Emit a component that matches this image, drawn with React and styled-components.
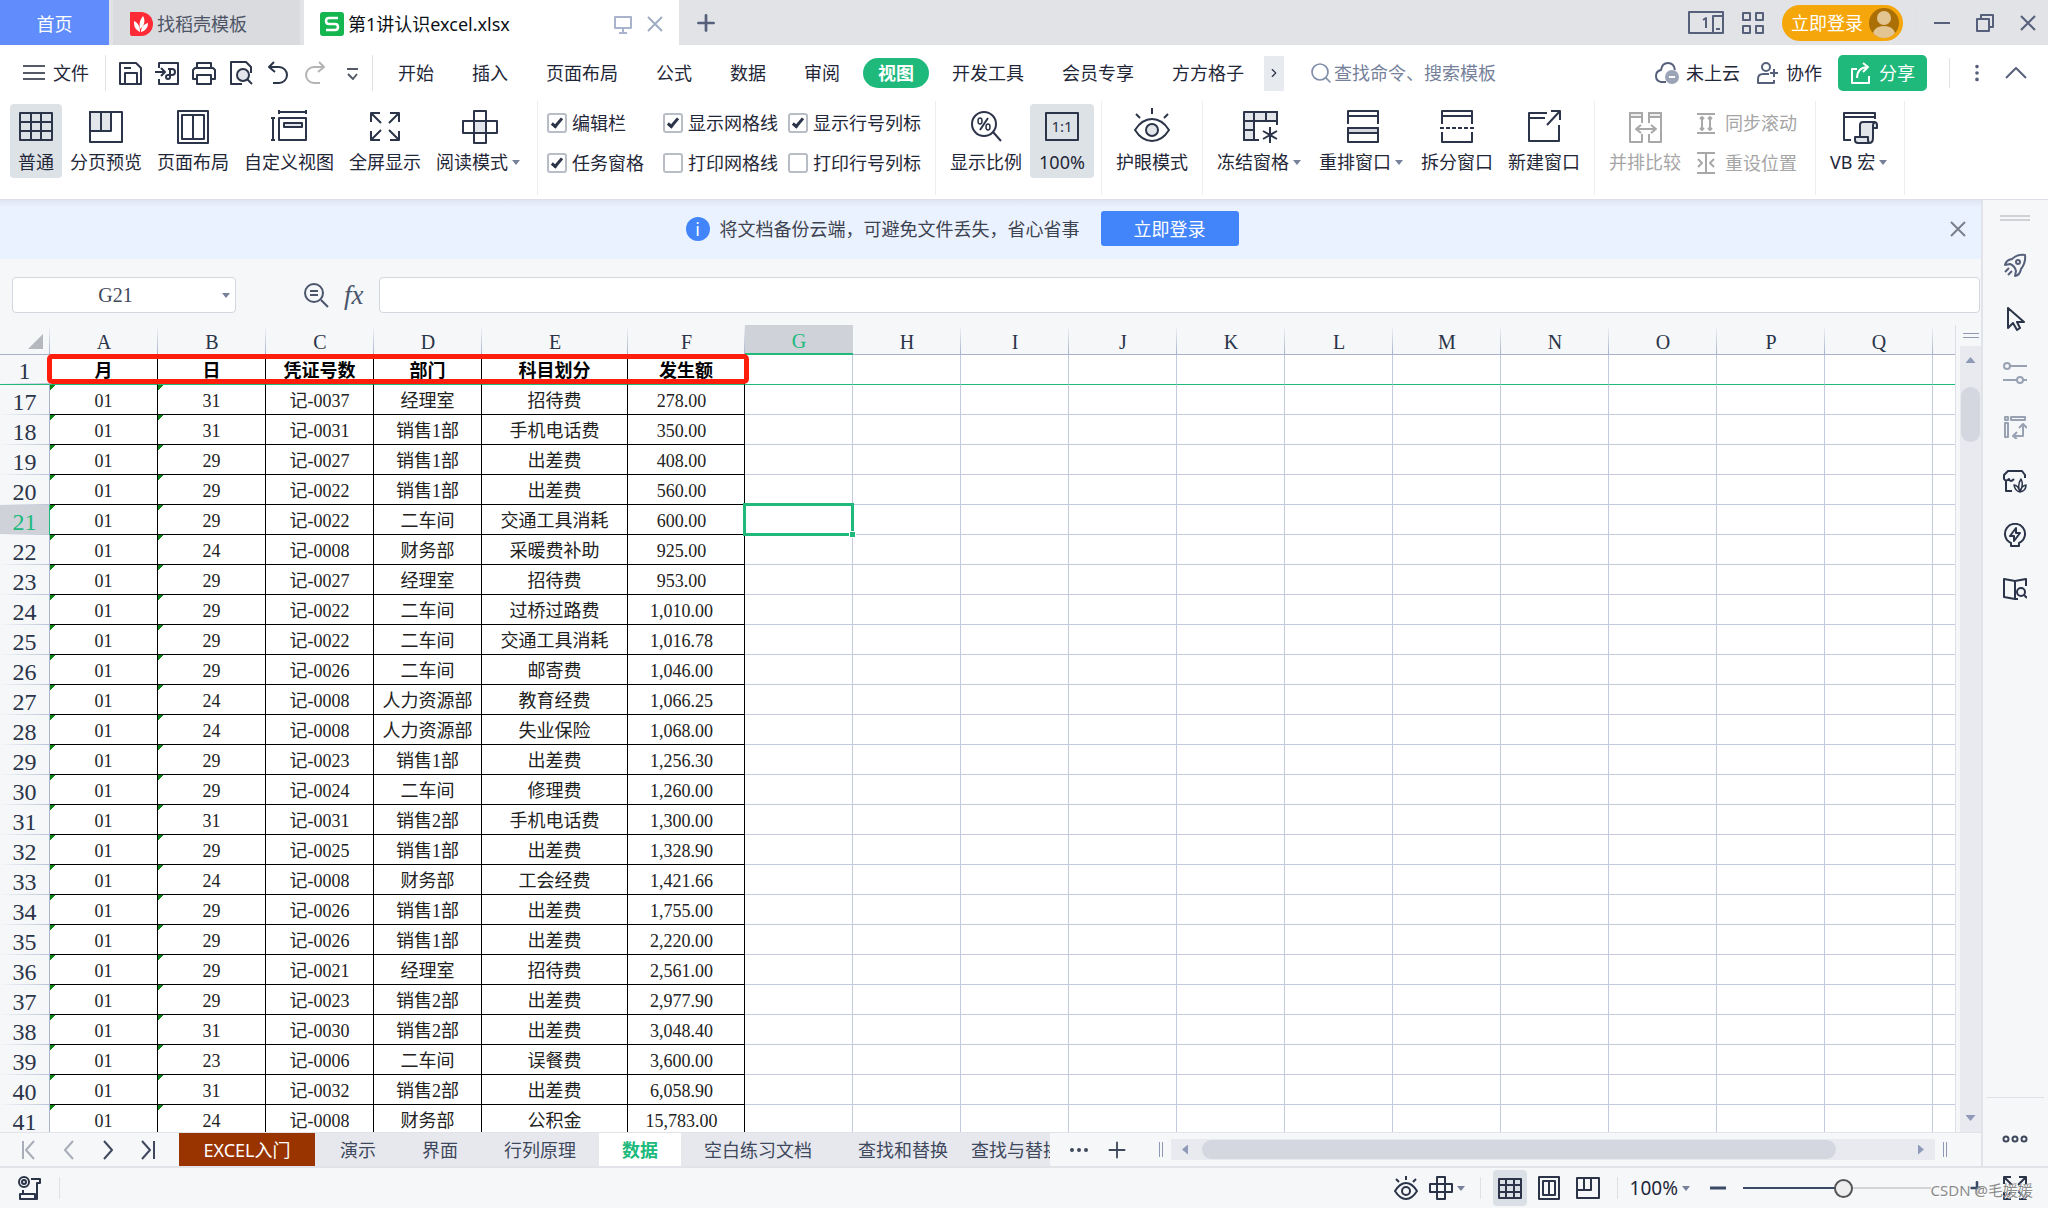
import styled, { createGlobalStyle, css } from "styled-components";
import {
  ChevronRight,
  Ellipsis,
  EllipsisVertical,
  Plus,
  Search,
} from "lucide-react";

const INK = "#2b3448";
const GREEN = "#20b97c";

const GlobalStyle = createGlobalStyle`
  *, *::before, *::after { box-sizing: border-box; }
  body {
    margin: 0;
    overflow: hidden;
    background: #f5f7f9;
    color: #1f2738;
    font-family: "Noto Sans", "Noto Sans CJK SC", sans-serif;
    font-size: 18px;
    line-height: 24px;
  }
  button, input {
    margin: 0;
    padding: 0;
    border: 0;
    background: none;
    color: inherit;
    font: inherit;
  }
  svg { display: block; flex: none; }
`;

/* ---------- data ---------- */

const menus = [
  "开始",
  "插入",
  "页面布局",
  "公式",
  "数据",
  "审阅",
  "视图",
  "开发工具",
  "会员专享",
  "方方格子",
];

const checks = [
  ["编辑栏", true],
  ["显示网格线", true],
  ["显示行号列标", true],
  ["任务窗格", true],
  ["打印网格线", false],
  ["打印行号列标", false],
];

const columns = [
  ["A", 108],
  ["B", 108],
  ["C", 108],
  ["D", 108],
  ["E", 146],
  ["F", 117],
  ["G", 108],
  ["H", 108],
  ["I", 108],
  ["J", 108],
  ["K", 108],
  ["L", 108],
  ["M", 108],
  ["N", 108],
  ["O", 108],
  ["P", 108],
  ["Q", 108],
  ["", 108],
];

const rowHeadWidth = 50;
const tableWidth = columns.reduce((sum, [, width]) => sum + width, rowHeadWidth);

const emptyColumns = columns.slice(6).map(([name]) => name);

const headings = ["月", "日", "凭证号数", "部门", "科目划分", "发生额"];

const rows = [
  ["31", "记-0037", "经理室", "招待费", "278.00"],
  ["31", "记-0031", "销售1部", "手机电话费", "350.00"],
  ["29", "记-0027", "销售1部", "出差费", "408.00"],
  ["29", "记-0022", "销售1部", "出差费", "560.00"],
  ["29", "记-0022", "二车间", "交通工具消耗", "600.00"],
  ["24", "记-0008", "财务部", "采暖费补助", "925.00"],
  ["29", "记-0027", "经理室", "招待费", "953.00"],
  ["29", "记-0022", "二车间", "过桥过路费", "1,010.00"],
  ["29", "记-0022", "二车间", "交通工具消耗", "1,016.78"],
  ["29", "记-0026", "二车间", "邮寄费", "1,046.00"],
  ["24", "记-0008", "人力资源部", "教育经费", "1,066.25"],
  ["24", "记-0008", "人力资源部", "失业保险", "1,068.00"],
  ["29", "记-0023", "销售1部", "出差费", "1,256.30"],
  ["29", "记-0024", "二车间", "修理费", "1,260.00"],
  ["31", "记-0031", "销售2部", "手机电话费", "1,300.00"],
  ["29", "记-0025", "销售1部", "出差费", "1,328.90"],
  ["24", "记-0008", "财务部", "工会经费", "1,421.66"],
  ["29", "记-0026", "销售1部", "出差费", "1,755.00"],
  ["29", "记-0026", "销售1部", "出差费", "2,220.00"],
  ["29", "记-0021", "经理室", "招待费", "2,561.00"],
  ["29", "记-0023", "销售2部", "出差费", "2,977.90"],
  ["31", "记-0030", "销售2部", "出差费", "3,048.40"],
  ["23", "记-0006", "二车间", "误餐费", "3,600.00"],
  ["31", "记-0032", "销售2部", "出差费", "6,058.90"],
  ["24", "记-0008", "财务部", "公积金", "15,783.00"],
];

const sheets = ["演示", "界面", "行列原理", "数据", "空白练习文档", "查找和替换"];

/* ---------- icons ---------- */

function Icon({ w = 24, h = w, color = INK, sw = 2, children }) {
  return (
    <svg
      width={w}
      height={h}
      viewBox={`0 0 ${w} ${h}`}
      fill="none"
      stroke={color}
      strokeWidth={sw}
      strokeLinejoin="round"
      aria-hidden="true"
    >
      {children}
    </svg>
  );
}

const big = { w: 38, h: 36 };
const shade = "#e2e5e9";

const GridIcon = () => (
  <Icon {...big}>
    <path d="M3 5h32v27H3zM3 14h32M3 23h32M14 5v27M24 5v27" />
  </Icon>
);

const PageBreakIcon = () => (
  <Icon {...big}>
    <path d="M3 4h21v19H3z" fill={shade} />
    <path d="M3 4h32v30H3zM14 4v19" />
  </Icon>
);

const PageLayoutIcon = () => (
  <Icon {...big}>
    <path d="M4 3h30v32H4zM8 7h22v24H8zM19 7v24" />
  </Icon>
);

const CustomViewIcon = () => (
  <Icon {...big}>
    <path d="M9 4h27M9 2v4M36 2v4M3 10v22M1 10h4M1 32h4M9 10h27v22H9z" />
    <path d="M14 15h18v4H14z" fill={shade} />
  </Icon>
);

const FullScreenIcon = () => (
  <Icon {...big}>
    <path d="M5 14V5h9M5 5l10 10M24 5h9v9M33 5L23 15M5 23v9h9M5 32l10-10M24 32h9v-9M33 32L23 22" />
  </Icon>
);

const ReadingIcon = () => (
  <Icon {...big}>
    <path d="M13 13h12v12H13z" fill={shade} />
    <path d="M13 3h12v32H13zM2 13h34v12H2z" />
  </Icon>
);

const ZoomRatioIcon = () => (
  <Icon {...big}>
    <circle cx="17" cy="16" r="12" />
    <path d="M26 24l8 9M21 10l-8 12" />
    <ellipse cx="13" cy="13" rx="2" ry="3" strokeWidth="1.5" />
    <ellipse cx="21" cy="19" rx="2" ry="3" strokeWidth="1.5" />
  </Icon>
);

const ActualSizeIcon = () => (
  <Icon {...big}>
    <path d="M3 5h32v27H3z" />
    <text
      x="19"
      y="24"
      textAnchor="middle"
      fontSize="15"
      fontFamily="Noto Sans"
      fill={INK}
      stroke="none"
    >
      1:1
    </text>
  </Icon>
);

const EyeIcon = () => (
  <Icon {...big}>
    <path d="M2 22C7 14 12 11 19 11s12 3 17 11C31 30 26 33 19 33S7 30 2 22z" />
    <circle cx="19" cy="22" r="6" fill={shade} />
    <path d="M19 0v6M3 6l4 4M35 6l-4 4" />
  </Icon>
);

const FreezeIcon = () => (
  <Icon {...big}>
    <path d="M2 4h33v9H12v19H2z" fill={shade} />
    <path d="M2 4h33v13M35 13H2M12 4v28M24 4v9M2 22h10M2 4v28h15" />
    <path d="M28 19v16M21 23l14 8M35 23l-14 8" />
  </Icon>
);

const ArrangeIcon = () => (
  <Icon {...big}>
    <path d="M4 20h30v5H4z" fill="#d6dae0" />
    <path d="M4 16V3h30v13M4 8h30M4 20h30v14H4zM4 25h30" />
  </Icon>
);

const SplitIcon = () => (
  <Icon {...big}>
    <path d="M4 16V3h30v13M4 8h30M4 24v10h30V24" />
    <path d="M2 20h34" strokeDasharray="4 2" />
  </Icon>
);

const NewWindowIcon = () => (
  <Icon {...big}>
    <path d="M22 5H4v28h30V17M4 10h16M22 17L35 3M26 3h9v9" />
  </Icon>
);

const CompareIcon = () => (
  <Icon {...big} color="#a8a8a8">
    <path d="M4 5h12v4H4zM23 5h12v4H23z" fill="#eeeeee" />
    <path d="M16 15V5H4v29h12v-8M23 15V5h12v29H23v-8M4 9h12M23 9h12M11 21h18M15 17l-5 4 5 4M25 17l5 4-5 4" />
  </Icon>
);

const MacroIcon = () => (
  <Icon {...big}>
    <path d="M10 32H3V5h31v6M3 9h31" />
    <path
      d="M19 28V17q0-3 3-3h11q3 0 3 3v3h-4v10q0 5-4 5H17q-3 0-3-3v-3h13v3q0 3 2 3"
      fill={shade}
    />
    <path d="M32 20v-3q0-2 2-3" />
  </Icon>
);

const SyncScrollIcon = () => (
  <Icon w={20} h={24} color="#a8a8a8">
    <path d="M1 3h18M1 22h18M6 6v13M14 6v13" />
    <path d="M4 8l2-2 2 2M4 17l2 2 2-2M12 8l2-2 2 2M12 17l2 2 2-2" />
  </Icon>
);

const ResetPositionIcon = () => (
  <Icon w={20} h={24} color="#a8a8a8">
    <path d="M1 2h18M1 22h18M10 2v20M2 8l4 4-4 4M18 8l-4 4 4 4" />
  </Icon>
);

const LeafLogo = () => (
  <svg width="24" height="24" viewBox="0 0 24 24" aria-hidden="true">
    <path d="M1 0h11a12 12 0 0 1 0 24H3a2 2 0 0 1-2-2z" fill="#fe2a35" />
    <path
      d="M11 20C5 17 5 13 5 9c4 2 6 5 6 11zM11 17c-1-6 0-9 3-13 3 5 1 10-3 13zM12 20c0-5 3-8 7-9 0 5-3 8-7 9z"
      fill="#fff"
    />
  </svg>
);

const SheetLogo = () => (
  <svg width="24" height="24" viewBox="0 0 24 24" aria-hidden="true">
    <rect width="24" height="24" rx="3" fill="#15b550" />
    <path
      d="M18 6H9q-3 0-3 3t3 3h6q3 0 3 3t-3 3H6"
      fill="none"
      stroke="#fff"
      strokeWidth="2.5"
    />
  </svg>
);

const MonitorIcon = () => (
  <Icon w={18} h={20} color="#a9b4cc">
    <path d="M1 3h16v11H1zM9 14v5M5 19h8" />
  </Icon>
);

const CrossIcon = ({ color = "#56607b" }) => (
  <Icon w={16} color={color}>
    <path d="M1 1l14 14M15 1L1 15" />
  </Icon>
);

const DashIcon = ({ color = "#56607b", sw = 2 }) => (
  <Icon w={16} color={color} sw={sw}>
    <path d="M0 8h16" />
  </Icon>
);

const PanelIcon = () => (
  <Icon w={36} h={24} color="#56607b">
    <path d="M1 1h34v21H1zM25 22V5h10M28 18h4" />
    <path d="M15 9l3-2v10" />
  </Icon>
);

const AppsIcon = () => (
  <Icon w={22} h={24} color="#56607b">
    <path d="M1 2h7v7H1zM14 2h7v7h-7zM1 15h7v7H1zM14 15h7v7h-7z" />
  </Icon>
);

const Avatar = () => (
  <svg width="30" height="30" viewBox="0 0 30 30" aria-hidden="true">
    <circle cx="15" cy="15" r="15" fill="#aa6f05" />
    <circle cx="15" cy="10" r="7" fill="#e3c592" />
    <path d="M4 25q2-7 11-7t11 7q-4 5-11 5T4 25z" fill="#e3c592" />
  </svg>
);

const RestoreIcon = () => (
  <Icon w={20} h={20} color="#56607b">
    <path d="M6 6V2h12v12h-4M2 6h12v12H2z" />
  </Icon>
);

const HamburgerIcon = () => (
  <Icon w={24} h={24} color="#555b66">
    <path d="M1 5h22M1 12h22M1 18h22" />
  </Icon>
);

const SaveIcon = () => (
  <Icon>
    <path d="M2 2h16l5 5v16H2zM7 23V12h12v11M6 7h7" />
  </Icon>
);

const PdfIcon = () => (
  <Icon>
    <path d="M4 7V2h19v21H4v-5M0 11h9M6 7l4 4-4 4M13 8h4q3 0 3 3t-3 3h-4q-2 0-2 2t2 2 2-2V8" />
  </Icon>
);

const PrintIcon = () => (
  <Icon>
    <path d="M5 7V2h14v5M5 18H1V9l2-2h18l2 2v9h-4M5 14h14v9H5z" />
  </Icon>
);

const PreviewIcon = () => (
  <Icon>
    <path d="M13 23H2V1h15l5 5v6" />
    <circle cx="14" cy="14" r="6" fill="#e3e5ea" />
    <path d="M18 18l5 5" />
  </Icon>
);

const UndoIcon = () => (
  <Icon>
    <path d="M8 1L3 6l6 5M3 6h10a8 8 0 0 1 0 16H7" />
  </Icon>
);

const RedoIcon = () => (
  <Icon color="#b4b4b6">
    <path d="M16 1l5 5-6 5M21 6H11a8 8 0 0 0 0 16h6" />
  </Icon>
);

const MoreToolsIcon = () => (
  <Icon color="#555b66">
    <path d="M7 8h11M8 13l5 5 4-5" />
  </Icon>
);

const CloudIcon = () => (
  <Icon w={26} h={24} color="#56607b">
    <path d="M12 21H7q-5-1-5-6t5-6q1-7 7-7t7 7" />
    <circle cx="18" cy="16" r="7" fill="#9aa4b6" stroke="none" />
    <path d="M15 16h6" stroke="#fff" />
  </Icon>
);

const PeopleIcon = () => (
  <Icon w={24} h={24} color="#56607b">
    <circle cx="10" cy="6" r="4" />
    <path d="M13 13H7q-5 0-5 5v4h16v-3M18 8v8M14 12h8" />
  </Icon>
);

const ShareIcon = () => (
  <Icon w={22} h={24} color="#fff">
    <path d="M7 8H2v14h17v-7M7 17q0-10 10-11M13 2l5 4-5 5" />
  </Icon>
);

const CollapseIcon = () => (
  <Icon w={24} color="#56607b">
    <path d="M2 17l10-10 10 10" />
  </Icon>
);

const FindIcon = () => (
  <Icon w={26} h={26} color="#4b556b">
    <circle cx="11" cy="11" r="9" />
    <path d="M18 18l7 7M7 9h8M7 13h8" />
  </Icon>
);

const FirstSheetIcon = () => (
  <Icon color="#a9adb8">
    <path d="M5 3v18M16 3l-8 9 8 9" />
  </Icon>
);

const PrevSheetIcon = () => (
  <Icon color="#a9adb8">
    <path d="M16 3l-8 9 8 9" />
  </Icon>
);

const NextSheetIcon = () => (
  <Icon color="#3f485c">
    <path d="M8 3l8 9-8 9" />
  </Icon>
);

const LastSheetIcon = () => (
  <Icon color="#3f485c">
    <path d="M7 3l8 9-8 9M19 3v18" />
  </Icon>
);

const RocketIcon = () => (
  <Icon color="#56607b">
    <path d="M22 2q-8-1-13 4Q3 7 2 12l5-1q5 2 6 7l-1 5q5-1 6-7 5-6 4-14z" />
    <circle cx="15" cy="9" r="2" />
    <path d="M6 15l-4 4M9 18l-4 4" />
  </Icon>
);

const CursorIcon = () => (
  <Icon>
    <path d="M5 1v20l5-5 4 7 3-2-3-6h7z" />
  </Icon>
);

const SlidersIcon = () => (
  <Icon color="#98a2b3">
    <circle cx="4" cy="5" r="3" />
    <circle cx="17" cy="19" r="3" />
    <path d="M7 5h17M0 19h14M20 19h4" />
  </Icon>
);

const SwapIcon = () => (
  <Icon color="#98a2b3">
    <path d="M2 2h3v3H2zM8 2h14v3H8zM2 8h3v14H2zM20 10v11h-9M16 13l4-4 4 4M14 17l-4 4 4 3" />
  </Icon>
);

const ShopIcon = () => (
  <Icon>
    <path d="M9 22H3V12M22 9V6l-3-4H5L1 6v4q2 3 5 0 1 4 5 0" />
    <path
      d="M17 23q-5-1-6-7 4 0 6 7zM17 23q-3-7 1-13 3 6-1 13zM17 23q1-6 6-7 0 6-6 7z"
      strokeWidth="1.5"
    />
  </Icon>
);

const BulbIcon = () => (
  <Icon>
    <path d="M8 23v-3A10 10 0 1 1 16 20v3zM13 5l-6 8h4v5l6-8h-4z" />
  </Icon>
);

const BookSearchIcon = () => (
  <Icon>
    <path d="M12 4L1 2v18l11 2zM12 4l11-2v7M12 22h3" />
    <circle cx="18" cy="15" r="4" />
    <path d="M21 18l3 3" />
  </Icon>
);

const MacroRecordIcon = () => (
  <Icon w={26} h={26}>
    <circle cx="7" cy="7" r="5" />
    <circle cx="7" cy="7" r="2" />
    <path d="M14 4h9v4h-3v16H3v-5h15v5M6 15v4" />
  </Icon>
);

const SmallEyeIcon = () => (
  <Icon>
    <path d="M1 15q5-8 11-8t11 8q-5 8-11 8T1 15zM12 0v4M2 3l3 3M22 3l-3 3" />
    <circle cx="12" cy="15" r="4" />
  </Icon>
);

const SmallCrossIcon = () => (
  <Icon>
    <path d="M8 1h8v22H8zM1 8h22v8H1z" />
  </Icon>
);

const SmallGridIcon = () => (
  <Icon>
    <path d="M1 3h22v19H1zM1 9h22M1 16h22M8 3v19M16 3v19" />
  </Icon>
);

const SmallBookIcon = () => (
  <Icon>
    <path d="M2 1h20v22H2zM6 5h12v14H6zM12 5v14" />
  </Icon>
);

const SmallBreakIcon = () => (
  <Icon>
    <path d="M1 2h22v20H1zM1 14h14V2M8 2v12" />
  </Icon>
);

const SmallExpandIcon = () => (
  <Icon>
    <path d="M1 8V1h7M1 1l8 8M16 1h7v7M23 1l-8 8M1 16v7h7M1 23l8-8M16 23h7v-7M23 23l-8-8" />
  </Icon>
);

/* ---------- shared bits ---------- */

const Caret = styled.span`
  width: 0;
  height: 0;
  margin: 0 3px 0 4px;
  border: 4px solid transparent;
  border-top: 5px solid #77819a;
  border-bottom: 0;
`;

const Divider = styled.span`
  width: 1px;
  height: ${(p) => p.$h || 36}px;
  background: #dfe1e6;
`;

const IconButton = styled.button`
  display: flex;
  align-items: center;
  justify-content: center;
`;

/* ---------- title bar ---------- */

const TitleBar = styled.header`
  display: flex;
  align-items: center;
  height: 45px;
  background: #e1e3e7;
  color: #56607b;
`;

const HomeTab = styled.button`
  width: 109px;
  height: 45px;
  padding-top: 2px;
  background: #608dfb;
  color: #fff;
`;

const DocTab = styled.button`
  display: flex;
  align-items: center;
  gap: 4px;
  width: ${(p) => p.$width}px;
  height: 45px;
  margin-left: 4px;
  padding: 2px 16px 0;
  background: ${(p) => (p.$active ? "#fff" : "#d9dbdf")};
  color: ${(p) => (p.$active ? "#0b0f18" : "#4c5466")};
`;

const TabTail = styled.span`
  display: flex;
  align-items: center;
  gap: 15px;
  margin-left: auto;
`;

const NewTabButton = styled(IconButton)`
  margin-left: 14px;
`;

const WindowTools = styled.div`
  display: flex;
  align-items: center;
  gap: 18px;
  margin-left: auto;
  padding-right: 12px;
`;

const LoginPill = styled.button`
  display: flex;
  align-items: center;
  gap: 6px;
  height: 36px;
  margin-right: -6px;
  padding: 0 4px 0 9px;
  border-radius: 18px;
  background: #f5a60a;
  color: #fff;
`;

const WindowButtons = styled.div`
  display: flex;
  align-items: center;
  gap: 25px;
`;

/* ---------- menu row ---------- */

const MenuRow = styled.nav`
  display: flex;
  align-items: center;
  height: 56px;
  padding: 0 20px 0 22px;
  background: #fff;
`;

const FileButton = styled.button`
  display: flex;
  align-items: center;
  gap: 7px;
  margin-right: 16px;
`;

const QuickTools = styled.div`
  display: flex;
  gap: 13px;
  padding: 0 8px 0 12px;
`;

const MenuList = styled.div`
  display: flex;
  align-items: center;
  gap: 8px;
  padding-left: 10px;
`;

const MenuItem = styled.button`
  height: 30px;
  padding: 0 15px;
  border-radius: 15px;
  ${(p) =>
    p.$active &&
    css`
      background: ${GREEN};
      color: #fff;
      font-weight: 700;
    `}
`;

const MenuMore = styled(IconButton)`
  width: 20px;
  height: 35px;
  margin-left: 5px;
  background: #e7ebef;
`;

const SearchBox = styled.label`
  display: flex;
  align-items: center;
  gap: 1px;
  flex: 1;
  margin-left: 25px;
  color: #8090ab;

  input {
    flex: 1;
    min-width: 0;
  }
  input::placeholder {
    color: #75819a;
    opacity: 1;
  }
`;

const ShareTools = styled.div`
  display: flex;
  align-items: center;
  gap: 16px;
  color: #56607b;
`;

const CloudButton = styled.button`
  display: flex;
  align-items: center;
  gap: 6px;
  color: #1f2738;
`;

const ShareButton = styled.button`
  display: flex;
  align-items: center;
  gap: 7px;
  height: 36px;
  margin-right: 6px;
  padding: 0 12px;
  border-radius: 5px;
  background: ${GREEN};
  color: #fff;
`;

/* ---------- ribbon ---------- */

const Ribbon = styled.section`
  display: flex;
  height: 99px;
  border-bottom: 1px solid #dcdfe8;
  background: #fff;
`;

const RibbonGroup = styled.div`
  display: flex;
  align-items: flex-start;
  gap: 1px;
  margin-bottom: 4px;
  padding: 3px 7px 0;
  border-right: 1px solid #eceef1;

  &:first-child {
    padding-left: 10px;
  }
`;

const RibbonButton = styled.button`
  display: flex;
  flex-direction: column;
  align-items: center;
  gap: 6px;
  height: 74px;
  padding: 4px 7px 0;
  border-radius: 4px;
  min-width: ${(p) => (p.$wide ? 64 : 50)}px;
  background: ${(p) => (p.$active ? "#dde2e6" : "none")};
  color: ${(p) => (p.disabled ? "#a5a5a5" : "inherit")};
  white-space: nowrap;

  span {
    display: flex;
    align-items: center;
  }
`;

const CheckGrid = styled.div`
  display: grid;
  grid-template-columns: 116px 125px auto;
  row-gap: 16px;
  padding: 7px 7px 0 2px;
`;

const CheckLabel = styled.label`
  display: flex;
  align-items: center;
  gap: 5px;
  white-space: nowrap;
`;

const CheckBox = styled.input`
  appearance: none;
  display: grid;
  place-items: center;
  width: 20px;
  height: 20px;
  border: 2px solid #b9bdc6;
  border-radius: 3px;
  background: #fff;

  &:checked::after {
    content: "";
    width: 12px;
    height: 6px;
    margin-bottom: 3px;
    border-left: 3px solid ${INK};
    border-bottom: 3px solid ${INK};
    transform: rotate(-50deg);
  }
`;

const SideBySide = styled.div`
  display: flex;
  flex-direction: column;
  gap: 16px;
  padding: 7px 11px 0 7px;
`;

const SmallTool = styled.button`
  display: flex;
  align-items: center;
  gap: 9px;
  color: #a5a5a5;
`;

function Tool({ icon, label, active, caret, wide, disabled }) {
  return (
    <RibbonButton $active={active} $wide={wide} disabled={disabled}>
      {icon}
      <span>
        {label}
        {caret && <Caret />}
      </span>
    </RibbonButton>
  );
}

/* ---------- work area ---------- */

const Window = styled.div`
  display: flex;
  flex-direction: column;
  height: 100vh;
`;

const Work = styled.div`
  display: flex;
  flex: 1;
  min-height: 0;
`;

const Editor = styled.main`
  display: flex;
  flex-direction: column;
  flex: 1;
  min-width: 0;
`;

const Banner = styled.div`
  display: flex;
  align-items: center;
  height: 59px;
  padding: 0 15px 2px 0;
  background: linear-gradient(#dfe5f2, #ebf2ff 7px);
  color: #3e4350;
`;

const BannerBody = styled.div`
  display: flex;
  align-items: center;
  justify-content: center;
  flex: 1;
  gap: 10px;
  margin-left: -26px;
`;

const InfoDot = styled.span`
  width: 24px;
  height: 24px;
  border-radius: 12px;
  background: #4285fb;
  color: #fff;
  text-align: center;
`;

const BannerButton = styled.button`
  width: 138px;
  height: 35px;
  margin-left: 11px;
  border-radius: 3px;
  background: #4285fb;
  color: #fff;
`;

const FormulaBar = styled.div`
  display: flex;
  align-items: center;
  height: 66px;
  padding: 6px 1px 0 12px;
`;

const NameBox = styled.div`
  display: flex;
  align-items: center;
  width: 224px;
  height: 36px;
  padding-right: 2px;
  border: 1px solid #d3d6dd;
  border-radius: 4px;
  background: #fff;

  input {
    flex: 1;
    min-width: 0;
    color: #3f485c;
    font: 20px/24px "Liberation Serif", serif;
    text-align: center;
  }
`;

const FormulaTools = styled.div`
  display: flex;
  align-items: center;
  gap: 15px;
  padding: 0 15px 0 67px;
`;

const FxButton = styled.button`
  color: #4b556b;
  font: italic 27px/28px "Liberation Serif", serif;
`;

const FormulaInput = styled.input`
  flex: 1;
  height: 36px;
  padding: 0 8px;
  border: 1px solid #d3d6dd;
  border-radius: 4px;
  background: #fff;
`;

const GridArea = styled.div`
  display: flex;
  flex: 1;
  min-height: 0;
`;

const GridView = styled.div`
  position: relative;
  flex: 1;
  min-width: 0;
  overflow: hidden;
  border-right: 1px solid #dcdfe6;
`;

const Table = styled.table`
  table-layout: fixed;
  border-collapse: separate;
  border-spacing: 0;
  font-family: "Liberation Serif", "Noto Sans CJK SC", serif;
  color: #222;
  text-align: center;

  tr {
    height: 30px;
  }
`;

const ColumnHead = styled.th`
  height: 30px;
  padding: 4px 0 0;
  border-bottom: 1px solid #a9b2cc;
  background: linear-gradient(#f5f7f9, #a9b2cc) right / 1px 100% no-repeat
    #f5f7f9;
  color: ${INK};
  font-size: 20px;
  font-weight: 400;
  line-height: 24px;
  ${(p) =>
    p.$active &&
    css`
      border-bottom: 2px solid ${GREEN};
      background: #cfd2d9;
      color: ${GREEN};
    `}
`;

const Corner = styled(ColumnHead)`
  &::after {
    content: "";
    display: block;
    margin-left: 28px;
    width: 15px;
    height: 15px;
    background: #b5b8be;
    clip-path: polygon(100% 0, 100% 100%, 0 100%);
  }
`;

const RowHead = styled.th`
  height: 30px;
  padding: 3px 0 0;
  border-right: 1px solid ${(p) => (p.$active ? GREEN : "#a9b2cc")};
  background: linear-gradient(90deg, #f5f7f9, #bcc4d8) bottom / 100% 1px
    no-repeat ${(p) => (p.$active ? "#cfd2d9" : "#f5f7f9")};
  color: ${(p) => (p.$active ? GREEN : INK)};
  font-size: 24px;
  font-weight: 400;
  line-height: 24px;
`;

const Cell = styled.td`
  position: relative;
  height: 30px;
  padding: ${(p) => (p.$amount ? "3px 9px 0 0" : "3px 0 0")};
  border-right: 1px solid ${(p) => (p.$filled ? "#000" : "#c3cadd")};
  border-bottom: 1px solid ${(p) => (p.$filled ? "#000" : "#c3cadd")};
  background: ${(p) =>
    p.$flag ? "linear-gradient(135deg, #0c8415 4px, #fff 4px)" : "#fff"};
  line-height: 24px;
  white-space: nowrap;
`;

const FrozenRow = styled.tr`
  ${RowHead}, ${Cell} {
    border-bottom: 1px solid ${GREEN};
  }
  ${Cell} {
    color: #000;
    font-weight: 700;
  }
`;

const ActiveFrame = styled.span`
  position: absolute;
  z-index: 1;
  inset: -2px;
  border: 3px solid ${GREEN};

  &::after {
    content: "";
    position: absolute;
    right: -5px;
    bottom: -5px;
    width: 7px;
    height: 7px;
    border: 1px solid #fff;
    background: ${GREEN};
  }
`;

const RedFrame = styled.div`
  position: absolute;
  left: 47px;
  top: 29px;
  width: 702px;
  height: 30px;
  border: 5px solid #ff1d0c;
  border-radius: 5px;
`;

const VerticalScroll = styled.div`
  display: flex;
  flex-direction: column;
  align-items: center;
  width: 21px;
  margin-left: 4px;
`;

const SplitHandle = styled.span`
  width: 16px;
  height: 5px;
  margin: 8px 0;
  border-top: 1px solid #8e9ab5;
  border-bottom: 1px solid #8e9ab5;
`;

const ScrollTrack = styled.div`
  display: flex;
  flex-direction: column;
  flex: 1;
  width: 100%;
  padding: 9px 1px;
  background: #e8eaef;
`;

const arrowMargin = { up: "0 auto 22px", down: "auto auto 0" };

const arrowShape = {
  up: "polygon(0 80%, 50% 20%, 100% 80%)",
  down: "polygon(0 20%, 100% 20%, 50% 80%)",
  left: "polygon(80% 0, 80% 100%, 20% 50%)",
  right: "polygon(20% 0, 80% 50%, 20% 100%)",
};

const Arrow = styled.button`
  width: 10px;
  height: 10px;
  margin: ${(p) => arrowMargin[p.$dir] || 0};
  background: #8e9ab8;
  clip-path: ${(p) => arrowShape[p.$dir]};
`;

const ScrollThumb = styled.div`
  height: 55px;
  border-radius: 10px;
  background: #d4d7df;
`;

/* ---------- sheet tabs ---------- */

const SheetBar = styled.div`
  display: flex;
  align-items: center;
  height: 36px;
  padding-right: 34px;
  border-top: 1px solid #e1e3e9;
  border-bottom: 2px solid #e1e3e9;
  color: #3f485c;
`;

const SheetNav = styled.div`
  display: flex;
  align-items: center;
  gap: 15px;
  width: 179px;
  padding-left: 18px;
`;

const SheetTabs = styled.div`
  display: flex;
  width: 871px;
  overflow: hidden;
  background: #e6e8ee;
`;

const SheetTab = styled.button`
  flex: none;
  height: 33px;
  padding: 0 23px;
  background: ${(p) => (p.$active ? "#fff" : "none")};
  color: ${(p) => (p.$active ? GREEN : "#3f485c")};
  font-weight: ${(p) => (p.$active ? 700 : 400)};

  &:last-child {
    padding: 0;
  }
`;

const BrownTab = styled(SheetTab)`
  width: 136px;
  margin-right: 2px;
  background: #993300;
  color: #fff;
`;

const SheetTools = styled.div`
  display: flex;
  align-items: center;
  gap: 13px;
  padding: 0 29px 0 17px;
`;

const Grip = styled.span`
  width: 4px;
  height: 15px;
  border-left: 1px solid #8e9ab5;
  border-right: 1px solid #8e9ab5;
`;

const HorizontalScroll = styled.div`
  display: flex;
  align-items: center;
  flex: 1;
  height: 21px;
  margin: 0 8px;
  padding: 0 9px;
  background: #e8eaef;
`;

const HorizontalThumb = styled.div`
  width: 85%;
  height: 19px;
  margin: 0 auto 0 12px;
  border-radius: 10px;
  background: #d4d7df;
`;

/* ---------- side panel and status bar ---------- */

const SidePanel = styled.aside`
  display: flex;
  flex-direction: column;
  align-items: center;
  gap: 30px;
  width: 67px;
  padding: 15px 2px 0 0;
  border-left: 2px solid #e1e3e9;
  border-bottom: 2px solid #e1e3e9;
`;

const PanelGrip = styled.span`
  width: 30px;
  height: 6px;
  margin-bottom: 2px;
  border-top: 2px solid #cfd1d4;
  border-bottom: 2px solid #cfd1d4;
`;

const PanelMore = styled.div`
  display: flex;
  justify-content: center;
  width: 58px;
  height: 69px;
  margin-top: auto;
  padding-top: 29px;
  border-top: 1px solid #dfe1e8;
`;

const StatusBar = styled.footer`
  position: relative;
  display: flex;
  align-items: center;
  height: 40px;
  padding: 0 21px 0 17px;
`;

const StatusLeft = styled.div`
  display: flex;
  align-items: center;
  gap: 16px;
  margin-right: auto;
`;

const StatusGroup = styled.div`
  display: flex;
  align-items: center;
  gap: ${(p) => p.$gap}px;
  padding: 0 12px;
`;

const DropIcon = styled.button`
  display: flex;
  align-items: center;
`;

const ViewButton = styled(IconButton)`
  width: 34px;
  height: 36px;
  border-radius: 4px;
  background: ${(p) => (p.$active ? "#dbe0e6" : "none")};
`;

const ZoomButton = styled.button`
  display: flex;
  align-items: center;
  font-size: 19px;
`;

const ZoomSlider = styled.input`
  appearance: none;
  width: 188px;
  height: 20px;
  background: linear-gradient(90deg, #3b4a66 54%, #d3d5d9 54%) center / 100% 2px
    no-repeat;

  &::-webkit-slider-thumb {
    appearance: none;
    width: 19px;
    height: 19px;
    border: 2px solid #555;
    border-radius: 10px;
    background: #eee;
  }
`;

const ZoomEnd = styled.div`
  display: flex;
  align-items: center;
  gap: 16px;
  margin-left: 24px;
`;

const Watermark = styled.span`
  position: absolute;
  right: 15px;
  bottom: 6px;
  color: #8b8b8b;
  font-size: 15px;
  text-shadow: 1px 1px 0 #fff;
`;

/* ---------- sheet ---------- */

function Sheet() {
  return (
    <Table style={{ width: tableWidth }}>
      <colgroup>
        <col style={{ width: rowHeadWidth }} />
        {columns.map(([name, width]) => (
          <col key={name} style={{ width }} />
        ))}
      </colgroup>
      <thead>
        <tr>
          <Corner />
          {columns.map(([name]) => (
            <ColumnHead key={name} $active={name === "G"}>
              {name}
            </ColumnHead>
          ))}
        </tr>
      </thead>
      <tbody>
        <FrozenRow>
          <RowHead>1</RowHead>
          {headings.map((text) => (
            <Cell key={text} $filled>
              {text}
            </Cell>
          ))}
          {emptyColumns.map((name) => (
            <Cell key={name} />
          ))}
        </FrozenRow>
        {rows.map(([day, voucher, dept, subject, amount], i) => {
          const number = i + 17;
          return (
            <tr key={number}>
              <RowHead $active={number === 21}>{number}</RowHead>
              <Cell $filled $flag>
                01
              </Cell>
              <Cell $filled $flag>
                {day}
              </Cell>
              <Cell $filled>{voucher}</Cell>
              <Cell $filled>{dept}</Cell>
              <Cell $filled>{subject}</Cell>
              <Cell $filled $amount>
                {amount}
              </Cell>
              {emptyColumns.map((name) => (
                <Cell key={name}>
                  {number === 21 && name === "G" && <ActiveFrame />}
                </Cell>
              ))}
            </tr>
          );
        })}
      </tbody>
    </Table>
  );
}

export default function App() {
  return (
    <Window>
      <GlobalStyle />
      <TitleBar>
        <HomeTab>首页</HomeTab>
        <DocTab $width={187}>
          <LeafLogo />
          找稻壳模板
        </DocTab>
        <DocTab $width={375} $active>
          <SheetLogo />
          第1讲认识excel.xlsx
          <TabTail>
            <MonitorIcon />
            <CrossIcon color="#a0abc4" />
          </TabTail>
        </DocTab>
        <NewTabButton aria-label="新建标签">
          <Plus size={26} strokeWidth={2.5} />
        </NewTabButton>
        <WindowTools>
          <PanelIcon />
          <AppsIcon />
          <LoginPill>
            立即登录
            <Avatar />
          </LoginPill>
          <Divider $h={30} />
          <WindowButtons>
            <DashIcon />
            <RestoreIcon />
            <CrossIcon />
          </WindowButtons>
        </WindowTools>
      </TitleBar>

      <MenuRow>
        <FileButton>
          <HamburgerIcon />
          文件
        </FileButton>
        <Divider />
        <QuickTools>
          <SaveIcon />
          <PdfIcon />
          <PrintIcon />
          <PreviewIcon />
          <UndoIcon />
          <RedoIcon />
          <MoreToolsIcon />
        </QuickTools>
        <Divider />
        <MenuList>
          {menus.map((name) => (
            <MenuItem key={name} $active={name === "视图"}>
              {name}
            </MenuItem>
          ))}
        </MenuList>
        <MenuMore aria-label="更多">
          <ChevronRight size={14} color={INK} />
        </MenuMore>
        <SearchBox>
          <Search size={24} strokeWidth={1.7} />
          <input placeholder="查找命令、搜索模板" />
        </SearchBox>
        <ShareTools>
          <CloudButton>
            <CloudIcon />
            未上云
          </CloudButton>
          <CloudButton>
            <PeopleIcon />
            协作
          </CloudButton>
          <ShareButton>
            <ShareIcon />
            分享
          </ShareButton>
          <Divider $h={30} />
          <EllipsisVertical size={22} />
          <CollapseIcon />
        </ShareTools>
      </MenuRow>

      <Ribbon>
        <RibbonGroup>
          <Tool icon={<GridIcon />} label="普通" active />
          <Tool icon={<PageBreakIcon />} label="分页预览" />
          <Tool icon={<PageLayoutIcon />} label="页面布局" />
          <Tool icon={<CustomViewIcon />} label="自定义视图" />
          <Tool icon={<FullScreenIcon />} label="全屏显示" />
          <Tool icon={<ReadingIcon />} label="阅读模式" caret />
        </RibbonGroup>
        <RibbonGroup>
          <CheckGrid>
            {checks.map(([text, on]) => (
              <CheckLabel key={text}>
                <CheckBox type="checkbox" defaultChecked={on} />
                {text}
              </CheckLabel>
            ))}
          </CheckGrid>
        </RibbonGroup>
        <RibbonGroup>
          <Tool icon={<ZoomRatioIcon />} label="显示比例" />
          <Tool icon={<ActualSizeIcon />} label="100%" active wide />
        </RibbonGroup>
        <RibbonGroup>
          <Tool icon={<EyeIcon />} label="护眼模式" />
        </RibbonGroup>
        <RibbonGroup>
          <Tool icon={<FreezeIcon />} label="冻结窗格" caret />
          <Tool icon={<ArrangeIcon />} label="重排窗口" caret />
          <Tool icon={<SplitIcon />} label="拆分窗口" />
          <Tool icon={<NewWindowIcon />} label="新建窗口" />
        </RibbonGroup>
        <RibbonGroup>
          <Tool icon={<CompareIcon />} label="并排比较" disabled />
          <SideBySide>
            <SmallTool disabled>
              <SyncScrollIcon />
              同步滚动
            </SmallTool>
            <SmallTool disabled>
              <ResetPositionIcon />
              重设位置
            </SmallTool>
          </SideBySide>
        </RibbonGroup>
        <RibbonGroup>
          <Tool icon={<MacroIcon />} label="VB 宏" caret />
        </RibbonGroup>
      </Ribbon>

      <Work>
        <Editor>
          <Banner>
            <BannerBody>
              <InfoDot>i</InfoDot>
              将文档备份云端，可避免文件丢失，省心省事
              <BannerButton>立即登录</BannerButton>
            </BannerBody>
            <IconButton aria-label="关闭">
              <CrossIcon color="#7b7f8a" />
            </IconButton>
          </Banner>

          <FormulaBar>
            <NameBox>
              <input aria-label="名称框" defaultValue="G21" />
              <Caret />
            </NameBox>
            <FormulaTools>
              <FindIcon />
              <FxButton>fx</FxButton>
            </FormulaTools>
            <FormulaInput aria-label="编辑栏" />
          </FormulaBar>

          <GridArea>
            <GridView>
              <Sheet />
              <RedFrame />
            </GridView>
            <VerticalScroll>
              <SplitHandle />
              <ScrollTrack>
                <Arrow $dir="up" aria-label="向上" />
                <ScrollThumb />
                <Arrow $dir="down" aria-label="向下" />
              </ScrollTrack>
            </VerticalScroll>
          </GridArea>

          <SheetBar>
            <SheetNav>
              <FirstSheetIcon />
              <PrevSheetIcon />
              <NextSheetIcon />
              <LastSheetIcon />
            </SheetNav>
            <SheetTabs>
              <BrownTab>EXCEL入门</BrownTab>
              {sheets.map((name) => (
                <SheetTab key={name} $active={name === "数据"}>
                  {name}
                </SheetTab>
              ))}
              <SheetTab>查找与替换</SheetTab>
            </SheetTabs>
            <SheetTools>
              <Ellipsis size={24} />
              <Plus size={26} strokeWidth={1.7} />
            </SheetTools>
            <Grip />
            <HorizontalScroll>
              <Arrow $dir="left" aria-label="向左" />
              <HorizontalThumb />
              <Arrow $dir="right" aria-label="向右" />
            </HorizontalScroll>
            <Grip />
          </SheetBar>
        </Editor>

        <SidePanel>
          <PanelGrip />
          <RocketIcon />
          <CursorIcon />
          <SlidersIcon />
          <SwapIcon />
          <ShopIcon />
          <BulbIcon />
          <BookSearchIcon />
          <PanelMore>
            <Icon w={26} h={24} color="#3f485c">
              <circle cx="4" cy="12" r="2.5" />
              <circle cx="13" cy="12" r="2.5" />
              <circle cx="22" cy="12" r="2.5" />
            </Icon>
          </PanelMore>
        </SidePanel>
      </Work>

      <StatusBar>
        <StatusLeft>
          <MacroRecordIcon />
          <Divider $h={22} />
        </StatusLeft>
        <StatusGroup $gap={11}>
          <SmallEyeIcon />
          <DropIcon aria-label="阅读模式">
            <SmallCrossIcon />
            <Caret />
          </DropIcon>
        </StatusGroup>
        <Divider $h={22} />
        <StatusGroup $gap={5}>
          <ViewButton $active aria-label="普通">
            <SmallGridIcon />
          </ViewButton>
          <ViewButton aria-label="页面布局">
            <SmallBookIcon />
          </ViewButton>
          <ViewButton aria-label="分页预览">
            <SmallBreakIcon />
          </ViewButton>
        </StatusGroup>
        <Divider $h={22} />
        <StatusGroup $gap={17}>
          <ZoomButton>
            100%
            <Caret />
          </ZoomButton>
          <DashIcon color="#3b4a66" sw={3} />
          <ZoomSlider type="range" aria-label="缩放" defaultValue={54} />
        </StatusGroup>
        <ZoomEnd>
          <Plus size={20} strokeWidth={3} color="#3b4a66" />
          <SmallExpandIcon />
        </ZoomEnd>
        <Watermark>CSDN @毛媛媛</Watermark>
      </StatusBar>
    </Window>
  );
}
